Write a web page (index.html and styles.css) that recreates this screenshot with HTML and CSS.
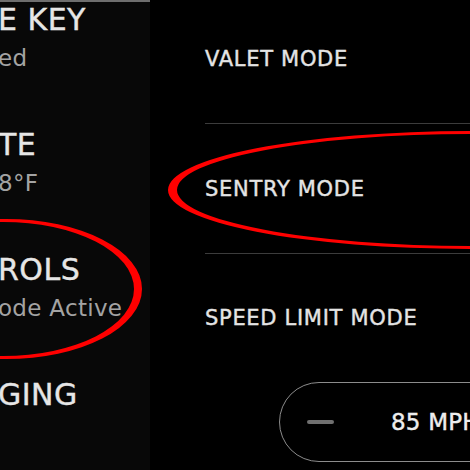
FILE: index.html
```html
<!DOCTYPE html>
<html lang="en">
<head>
  <meta charset="UTF-8">
  <meta name="viewport" content="width=device-width, initial-scale=1.0">
  <title>Controls</title>
  <link rel="stylesheet" href="styles.css">
</head>
<body>
  <div class="screen">
    <!-- Left menu (cropped) -->
    <div class="side-menu">
      <div class="menu-item">
        <div class="menu-title">E KEY</div>
        <div class="menu-sub">ed</div>
      </div>
      <div class="menu-item">
        <div class="menu-title">TE</div>
        <div class="menu-sub">8°F</div>
      </div>
      <div class="menu-item">
        <div class="menu-title">ROLS</div>
        <div class="menu-sub">ode Active</div>
      </div>
      <div class="menu-item">
        <div class="menu-title">GING</div>
      </div>
    </div>

    <!-- Settings list -->
    <div class="settings">
      <div class="setting-row">VALET MODE</div>
      <div class="setting-row">SENTRY MODE</div>
      <div class="setting-row no-line">SPEED LIMIT MODE</div>
      <div class="speed-pill">
        <span class="minus"></span>
        <span class="speed-value">85 MPH</span>
      </div>
    </div>
  </div>

  <!-- Red hand-drawn circles -->
  <svg class="marks" width="470" height="470" viewBox="0 0 470 470">
    <path fill="#ff0000" fill-rule="evenodd"
      d="M168 190 A302 59 0 1 0 772 190 A302 59 0 1 0 168 190 Z
         M177 190 A294 56 0 1 0 765 190 A294 56 0 1 0 177 190 Z"/>
    <path fill="#ff0000" fill-rule="evenodd"
      d="M-130 289 A136 70 0 1 0 142 289 A136 70 0 1 0 -130 289 Z
         M-128 289 A131 67 0 1 0 134 289 A131 67 0 1 0 -128 289 Z"/>
  </svg>
</body>
</html>
```

FILE: styles.css
```css
/* General */
body {
  margin: 0;
  background: #000;
  font-family: "DejaVu Sans", sans-serif;
}

.screen {
  position: relative;
  display: flex;
  width: 470px;
  height: 470px;
  overflow: hidden;
}

/* Left menu */
.side-menu {
  width: 150px;
  flex-shrink: 0;
  background: #080808;
  border-top: 2px solid #6e6e6e;
  overflow: hidden;
  white-space: nowrap;
  padding-top: 3px;
}

.menu-item {
  height: 125px;
  margin-left: -2px;
}

.menu-title {
  font-size: 30px;
  line-height: 30px;
  color: #e6e6e6;
  letter-spacing: 0.5px;
  -webkit-text-stroke: 0.4px #e6e6e6;
}

.menu-sub {
  font-size: 23px;
  line-height: 26px;
  margin-top: 10px;
  color: #a3a3a3;
  letter-spacing: 0.3px;
}

/* Settings */
.settings {
  flex: 1;
  padding-left: 55px;
  margin-top: -6px;
}

.setting-row {
  height: 130px;
  display: flex;
  align-items: center;
  box-sizing: border-box;
  border-bottom: 1px solid #3c3c3c;
  font-size: 21px;
  color: #e4e4e4;
  letter-spacing: 0.7px;
  -webkit-text-stroke: 0.4px #e4e4e4;
  white-space: nowrap;
}

.setting-row.no-line {
  border-bottom: none;
  height: 128px;
}

.speed-pill {
  margin-left: 74px;
  width: 260px;
  height: 80px;
  box-sizing: border-box;
  border: 1.5px solid #8c8c8c;
  border-radius: 40px;
  display: flex;
  align-items: center;
  padding-left: 27px;
}

.minus {
  width: 27px;
  height: 4px;
  border-radius: 2px;
  background: #707070;
}

.speed-value {
  margin-left: 57px;
  font-size: 23px;
  color: #ededed;
  letter-spacing: 0.2px;
  -webkit-text-stroke: 0.4px #ededed;
  white-space: nowrap;
}

/* Annotation overlay */
.marks {
  position: absolute;
  top: 0;
  left: 0;
  pointer-events: none;
}
```
